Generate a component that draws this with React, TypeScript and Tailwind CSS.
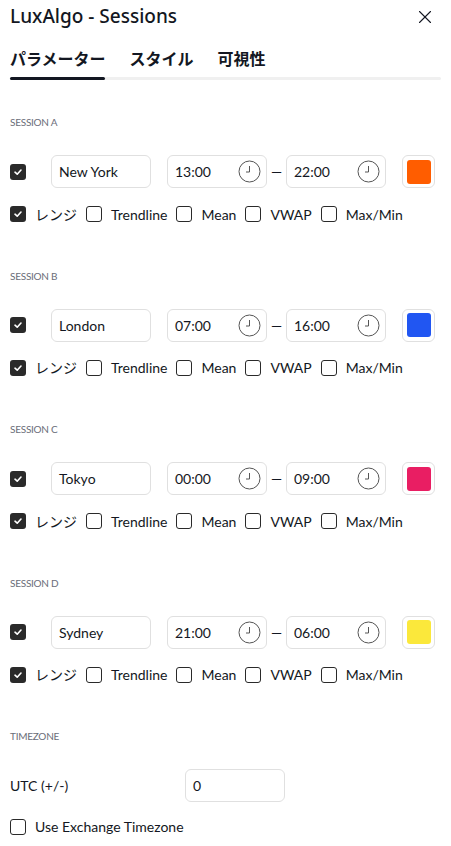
import { X } from 'lucide-react';

type Session = {
  label: string;
  name: string;
  start: string;
  end: string;
  color: string;
};

const sessions: Session[] = [
  { label: 'SESSION A', name: 'New York', start: '13:00', end: '22:00', color: 'bg-[#ff5d00]' },
  { label: 'SESSION B', name: 'London', start: '07:00', end: '16:00', color: 'bg-[#2156f2]' },
  { label: 'SESSION C', name: 'Tokyo', start: '00:00', end: '09:00', color: 'bg-[#e91e63]' },
  { label: 'SESSION D', name: 'Sydney', start: '21:00', end: '06:00', color: 'bg-[#fbe83b]' },
];

const body = { fontFamily: 'Lato, "Noto Sans CJK JP", sans-serif' };

function Checkbox({ checked }: { checked?: boolean }) {
  if (checked) {
    return (
      <span className="flex h-4 w-4 shrink-0 items-center justify-center rounded-[3px] bg-[#2a2a2a]">
        <svg width="10" height="10" viewBox="0 0 10 10" fill="none">
          <path d="M2 5.2 4.2 7.2 8 3" stroke="white" strokeWidth="1.6" strokeLinecap="round" strokeLinejoin="round" />
        </svg>
      </span>
    );
  }
  return <span className="h-4 w-4 shrink-0 rounded-[3px] border border-[#2a2a2a] bg-white" />;
}

function Clock() {
  return (
    <svg width="23" height="23" viewBox="0 0 23 23" fill="none">
      <circle cx="11.5" cy="11.5" r="10.5" stroke="#555" strokeWidth="1" />
      <path d="M11.5 6v6H8" stroke="#555" strokeWidth="1" />
    </svg>
  );
}

function TimeInput({ value }: { value: string }) {
  return (
    <div className="flex h-[33px] w-[100px] items-center justify-between rounded-md border border-[#e0e0e0] pl-[7px] pr-[5px] text-[14px] text-[#131722]">
      <span>{value}</span>
      <Clock />
    </div>
  );
}

function Option({ label, checked }: { label: string; checked?: boolean }) {
  return (
    <div className="flex items-center gap-[9px]">
      <Checkbox checked={checked} />
      <span className="text-[14px] text-[#131722]">{label}</span>
    </div>
  );
}

function SessionBlock({ s }: { s: Session }) {
  return (
    <section className="h-[153.5px]">
      <div className="pt-[16px] text-[10px] leading-none tracking-tight text-[#6a6d78]">{s.label}</div>
      <div className="mt-[28px] flex items-center">
        <Checkbox checked />
        <div className="ml-[25px] flex h-[33px] w-[100px] items-center rounded-md border border-[#e0e0e0] px-[7px] text-[14px] text-[#131722]">
          {s.name}
        </div>
        <div className="ml-[16px]">
          <TimeInput value={s.start} />
        </div>
        <span className="w-[19px] text-center text-[14px] text-[#131722]">—</span>
        <TimeInput value={s.end} />
        <div className="ml-[16px] flex h-[33px] w-[33px] items-center justify-center rounded-md border border-[#e0e0e0]">
          <span className={`h-[24px] w-[24px] rounded-[3px] ${s.color}`} />
        </div>
      </div>
      <div className="mt-[15px] flex h-[22px] items-center gap-[9px]">
        <Option label="レンジ" checked />
        <Option label="Trendline" />
        <Option label="Mean" />
        <Option label="VWAP" />
        <Option label="Max/Min" />
      </div>
    </section>
  );
}

export default function App() {
  return (
    <main
      className="h-[846px] w-[451px] overflow-hidden bg-white text-[#131722]"
      style={{ fontFamily: '"Noto Sans", "Noto Sans CJK JP", sans-serif' }}
    >
      <header className="flex h-[33px] items-center justify-between pl-[10px] pr-[15px]">
        <h1 className="text-[19px] font-medium">LuxAlgo - Sessions</h1>
        <X size={22} strokeWidth={1.2} />
      </header>
      <nav className="px-[10px] pt-[15px]">
        <div className="flex gap-[24px] text-[16px] font-bold leading-[22px]">
          <span>パラメーター</span>
          <span>スタイル</span>
          <span>可視性</span>
        </div>
        <div className="mt-[7px] h-[3px] rounded-full bg-[#f0f0f0]">
          <div className="h-[3px] w-[95px] rounded-full bg-[#131722]" />
        </div>
      </nav>
      <div className="px-[10px] pt-[21px]" style={body}>
        {sessions.map((s) => (
          <SessionBlock key={s.label} s={s} />
        ))}
        <section>
          <div className="pt-[16px] text-[10px] leading-none tracking-tight text-[#6a6d78]">TIMEZONE</div>
          <div className="mt-[28px] flex items-center">
            <span className="w-[175px] text-[14px]">UTC (+/-)</span>
            <div className="flex h-[33px] w-[100px] items-center rounded-md border border-[#e0e0e0] px-[7px] text-[14px]">0</div>
          </div>
          <div className="mt-[14px]">
            <Option label="Use Exchange Timezone" />
          </div>
        </section>
      </div>
    </main>
  );
}
